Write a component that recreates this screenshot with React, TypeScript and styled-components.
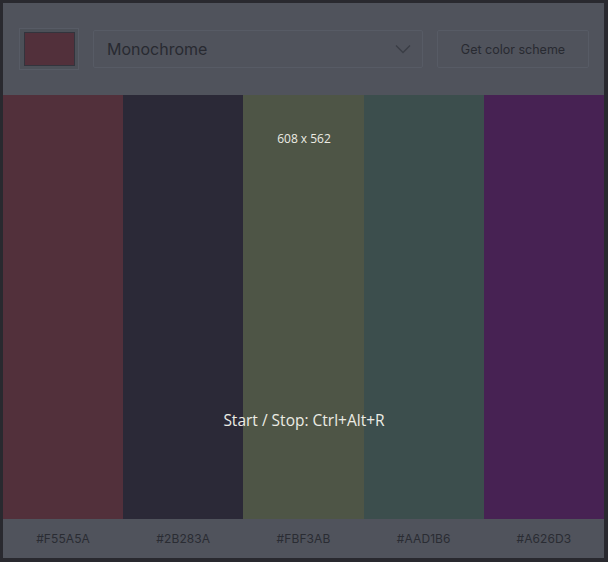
import React from "react";
import styled, { createGlobalStyle } from "styled-components";

const Global = createGlobalStyle`
  html, body { margin: 0; padding: 0; background: #29292f; }
  body { font-family: Inter, "Noto Sans", sans-serif; }
`;

const Frame = styled.div`
  position: relative;
  width: 608px;
  height: 562px;
  box-sizing: border-box;
  padding: 3px 4px 4px 3px;
  background: #29292f;
`;

const Main = styled.div`
  display: flex;
  flex-direction: column;
  height: 100%;
  background: #50535c;
`;

const Header = styled.header`
  display: flex;
  align-items: center;
  gap: 14px;
  height: 92px;
  box-sizing: border-box;
  padding: 0 15px 0 16px;
`;

const SwatchBox = styled.div`
  display: flex;
  align-items: center;
  justify-content: center;
  width: 60px;
  height: 42px;
  box-sizing: border-box;
  border: 1px solid #575b65;
  background: #4c5058;
`;

const Swatch = styled.div`
  width: 51px;
  height: 34px;
  box-sizing: border-box;
  border: 1px solid #33343d;
  background: #52303b;
`;

const Select = styled.div`
  flex: 1;
  display: flex;
  align-items: center;
  justify-content: space-between;
  height: 38px;
  box-sizing: border-box;
  padding: 0 11px 0 13px;
  border: 1px solid #575b65;
  border-radius: 2px;
  font-size: 16px;
  color: #282a31;
`;

const Button = styled.div`
  width: 152px;
  height: 38px;
  box-sizing: border-box;
  display: flex;
  align-items: center;
  justify-content: center;
  border: 1px solid #575b65;
  border-radius: 2px;
  font-size: 12.5px;
  color: #282a31;
`;

const Columns = styled.div`
  flex: 1;
  display: grid;
  grid-template-columns: repeat(5, 1fr);
`;

const Column = styled.div<{ $c: string }>`
  background: ${(p) => p.$c};
`;

const Footer = styled.footer`
  display: grid;
  grid-template-columns: repeat(5, 1fr);
  height: 39px;
`;

const Hex = styled.div`
  display: flex;
  align-items: center;
  justify-content: center;
  font-size: 12px;
  color: #2a2c33;
  letter-spacing: 0.1px;
`;

const OverlayText = styled.div<{ $top: number; $size: number }>`
  position: absolute;
  left: 0;
  right: 0;
  top: ${(p) => p.$top}px;
  text-align: center;
  font-family: "Open Sans", "Noto Sans", sans-serif;
  font-size: ${(p) => p.$size}px;
  color: #ecece4;
  pointer-events: none;
`;

const colors = [
  { hex: "#F55A5A", shown: "#52303b" },
  { hex: "#2B283A", shown: "#2b2937" },
  { hex: "#FBF3AB", shown: "#4e5546" },
  { hex: "#AAD1B6", shown: "#3c4e4d" },
  { hex: "#A626D3", shown: "#472253" },
];

export default function App() {
  return (
    <>
      <Global />
      <Frame>
        <Main>
          <Header>
            <SwatchBox>
              <Swatch />
            </SwatchBox>
            <Select>
              <span>Monochrome</span>
              <svg width="16" height="10" viewBox="0 0 16 10" fill="none">
                <path d="M1 1.5 L8 8.5 L15 1.5" stroke="#3a3d45" strokeWidth="1.3" />
              </svg>
            </Select>
            <Button>Get color scheme</Button>
          </Header>
          <Columns>
            {colors.map((c) => (
              <Column key={c.hex} $c={c.shown} />
            ))}
          </Columns>
          <Footer>
            {colors.map((c) => (
              <Hex key={c.hex}>{c.hex}</Hex>
            ))}
          </Footer>
        </Main>
        <OverlayText $top={130} $size={12}>608 x 562</OverlayText>
        <OverlayText $top={409} $size={15.5}>Start / Stop: Ctrl+Alt+R</OverlayText>
      </Frame>
    </>
  );
}
